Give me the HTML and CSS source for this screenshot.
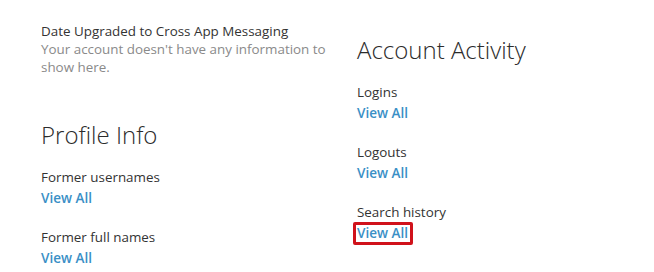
FILE: index.html
```html
<!DOCTYPE html>
<html lang="en">
<head>
    <meta charset="UTF-8">
    <meta name="viewport" content="width=device-width, initial-scale=1.0">
    <title>Account Data</title>
    <link rel="stylesheet" href="styles.css">
</head>
<body>
    <div class="data-page">
        <!-- Cột trái -->
        <div class="left-column">
            <div class="info-block">
                <div class="info-label">Date Upgraded to Cross App Messaging</div>
                <div class="info-empty">Your account doesn't have any information to show here.</div>
            </div>

            <div class="section-title profile-title">Profile Info</div>

            <div class="data-group">
                <div class="info-label">Former usernames</div>
                <a class="view-link" href="#">View All</a>
            </div>
            <div class="data-group">
                <div class="info-label">Former full names</div>
                <a class="view-link" href="#">View All</a>
            </div>
        </div>

        <!-- Cột phải -->
        <div class="right-column">
            <div class="section-title activity-title">Account Activity</div>

            <div class="data-group">
                <div class="info-label">Logins</div>
                <a class="view-link" href="#">View All</a>
            </div>
            <div class="data-group">
                <div class="info-label">Logouts</div>
                <a class="view-link" href="#">View All</a>
            </div>
            <div class="data-group">
                <div class="info-label">Search history</div>
                <a class="view-link highlighted" href="#">View All</a>
            </div>
        </div>
    </div>
</body>
</html>
```

FILE: styles.css
```css
body, html {
    margin: 0;
    padding: 0;
    background: #fff;
    font-family: 'Open Sans', 'Noto Sans', sans-serif;
    overflow: hidden;
}

.data-page {
    display: grid;
    grid-template-columns: 316px 1fr;
    padding: 22px 0 0 41px;
}

.left-column, .right-column {
    display: flex;
    flex-direction: column;
    align-items: flex-start;
}

.info-label {
    font-size: 13.4px;
    line-height: 18px;
    color: #333;
}

.info-empty {
    font-size: 13.4px;
    line-height: 18px;
    color: #8a8a8a;
    width: 296px;
}

.section-title {
    font-size: 24px;
    font-weight: 300;
    line-height: 30px;
    color: #2b2b2b;
}

.profile-title {
    margin-top: 44px;
    margin-bottom: 18px;
}

.activity-title {
    margin-top: 13px;
    margin-bottom: 18px;
}

.data-group {
    display: flex;
    flex-direction: column;
    align-items: flex-start;
    margin-bottom: 18px;
}

.data-group:last-child {
    margin-bottom: 0;
}

.view-link {
    font-size: 13.5px;
    font-weight: 600;
    line-height: 24px;
    color: #3a8fc6;
    text-decoration: none;
}

.highlighted {
    border: 3px solid #d0121b;
    border-radius: 2px;
    padding: 0 2px 0 1px;
    margin: 1px 0 0 -4px;
    line-height: 17px;
}
```
